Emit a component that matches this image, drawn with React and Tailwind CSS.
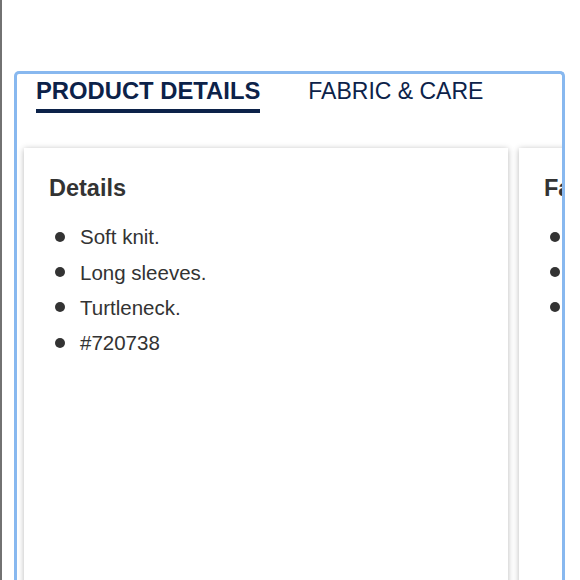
const details = ["Soft knit.", "Long sleeves.", "Turtleneck.", "#720738"];
const fabric = ["Cotton.", "Machine wash.", "Imported."];

function Card({ title, items, className = "" }) {
  return (
    <div
      className={`shrink-0 bg-white shadow-[0_1px_6px_rgba(0,0,0,0.28)] pt-[26px] pl-[25px] pr-[25px] ${className}`}
    >
      <h3 className="text-[23.5px] leading-[28px] font-bold text-[#333333] whitespace-nowrap">
        {title}
      </h3>
      <ul className="mt-[18px]">
        {items.map((item) => (
          <li key={item} className="flex items-center h-[35.3px] text-[20.5px] text-[#333333] whitespace-nowrap">
            <span className="w-[10px] h-[10px] rounded-full bg-[#333333] ml-[6px] mr-[15px] shrink-0 -translate-y-[1px]" />
            {item}
          </li>
        ))}
      </ul>
    </div>
  );
}

export default function App() {
  return (
    <div
      className="w-[580px] h-[580px] overflow-hidden bg-white flex"
      style={{ fontFamily: '"Liberation Sans", Arial, sans-serif' }}
    >
      <div className="w-[2px] h-full bg-[#727272] shrink-0" />
      <div className="ml-[12px] mt-[71px] w-[551px] h-[520px] border-[3px] border-b-0 border-[#88b8ef] rounded-t-[5px] overflow-hidden flex flex-col">
        <div className="flex gap-[48px] pl-[19px] pt-[3px]">
          <button className="text-[23.8px] leading-[28px] font-bold text-[#0c2249] border-b-4 border-[#0c2249] pb-[4px]">
            PRODUCT DETAILS
          </button>
          <button className="text-[23px] leading-[28px] text-[#0c2249] pb-[8px]">
            FABRIC &amp; CARE
          </button>
        </div>
        <div className="flex gap-[11px] ml-[7px] mt-[35px] flex-1">
          <Card title="Details" items={details} className="w-[484px]" />
          <Card title="Fabric & Care" items={fabric} className="w-[484px]" />
        </div>
      </div>
    </div>
  );
}
